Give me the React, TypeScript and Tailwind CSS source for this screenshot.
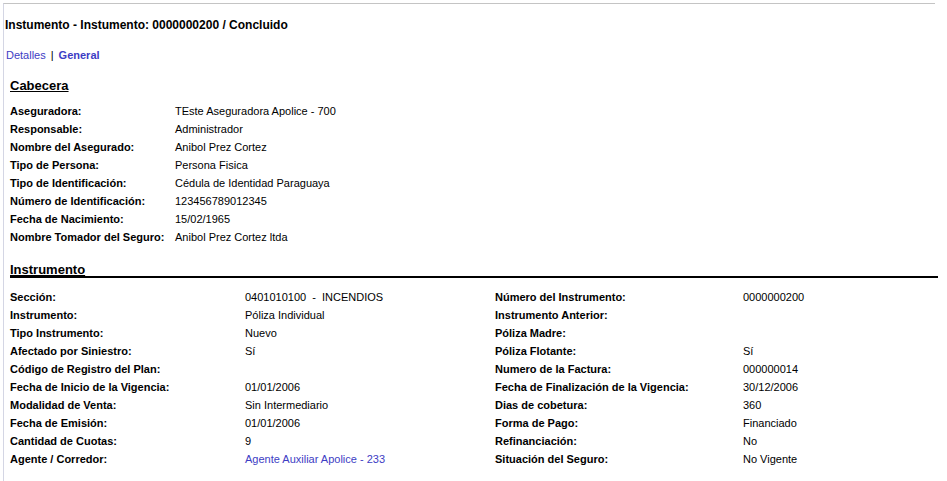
import React from "react";

const cabecera: [string, string][] = [
  ["Aseguradora:", "TEste Aseguradora Apolice - 700"],
  ["Responsable:", "Administrador"],
  ["Nombre del Asegurado:", "Anibol Prez Cortez"],
  ["Tipo de Persona:", "Persona Fisica"],
  ["Tipo de Identificación:", "Cédula de Identidad Paraguaya"],
  ["Número de Identificación:", "123456789012345"],
  ["Fecha de Nacimiento:", "15/02/1965"],
  ["Nombre Tomador del Seguro:", "Anibol Prez Cortez ltda"],
];

type Row = { l1: string; v1: string; l2: string; v2: string; link?: boolean };

const instrumento: Row[] = [
  { l1: "Sección:", v1: "0401010100  -  INCENDIOS", l2: "Número del Instrumento:", v2: "0000000200" },
  { l1: "Instrumento:", v1: "Póliza Individual", l2: "Instrumento Anterior:", v2: "" },
  { l1: "Tipo Instrumento:", v1: "Nuevo", l2: "Póliza Madre:", v2: "" },
  { l1: "Afectado por Siniestro:", v1: "Sí", l2: "Póliza Flotante:", v2: "Sí" },
  { l1: "Código de Registro del Plan:", v1: "", l2: "Numero de la Factura:", v2: "000000014" },
  { l1: "Fecha de Inicio de la Vigencia:", v1: "01/01/2006", l2: "Fecha de Finalización de la Vigencia:", v2: "30/12/2006" },
  { l1: "Modalidad de Venta:", v1: "Sin Intermediario", l2: "Dias de cobetura:", v2: "360" },
  { l1: "Fecha de Emisión:", v1: "01/01/2006", l2: "Forma de Pago:", v2: "Financiado" },
  { l1: "Cantidad de Cuotas:", v1: "9", l2: "Refinanciación:", v2: "No" },
  { l1: "Agente / Corredor:", v1: "Agente Auxiliar Apolice - 233", l2: "Situación del Seguro:", v2: "No Vigente", link: true },
];

export default function App() {
  return (
    <div className="w-[947px] h-[481px] bg-white overflow-hidden font-['Liberation_Sans',Arial,sans-serif] text-[11px] text-black">
      <div className="ml-[3px] mt-[3px] w-[932px] h-[478px] border-l border-t border-l-[#d4d6e4] border-t-[#c4c4c4]">
        <div className="pl-[1px] pt-[13px] text-[12px] font-bold leading-[16px]">
          Instumento - Instumento: 0000000200 / Concluido
        </div>

        <div className="pl-[2px] mt-[15px] leading-[14px] flex gap-[5px]">
          <span className="text-[#3d3dc4]">Detalles</span>
          <span>|</span>
          <span className="text-[#3d3dc4] font-bold">General</span>
        </div>

        <div className="pl-[6px] mt-[16px]">
          <div className="text-[13px] font-bold underline leading-[16px]">Cabecera</div>
          <div className="mt-[8px]">
            {cabecera.map(([l, v]) => (
              <div key={l} className="flex h-[18px] items-center">
                <span className="w-[165px] font-bold">{l}</span>
                <span>{v}</span>
              </div>
            ))}
          </div>

          <div className="mt-[18px] -mr-[3px] border-b-2 border-black">
            <div className="text-[13px] font-bold underline leading-[12px]">Instrumento</div>
          </div>
          <div className="mt-[10px]">
            {instrumento.map((r) => (
              <div key={r.l1} className="grid grid-cols-[235px_250px_248px_1fr] h-[18px] items-center">
                <span className="font-bold">{r.l1}</span>
                <span className={r.link ? "text-[#3d3dc4] whitespace-pre" : "whitespace-pre"}>{r.v1}</span>
                <span className="font-bold">{r.l2}</span>
                <span>{r.v2}</span>
              </div>
            ))}
          </div>
        </div>
      </div>
    </div>
  );
}
